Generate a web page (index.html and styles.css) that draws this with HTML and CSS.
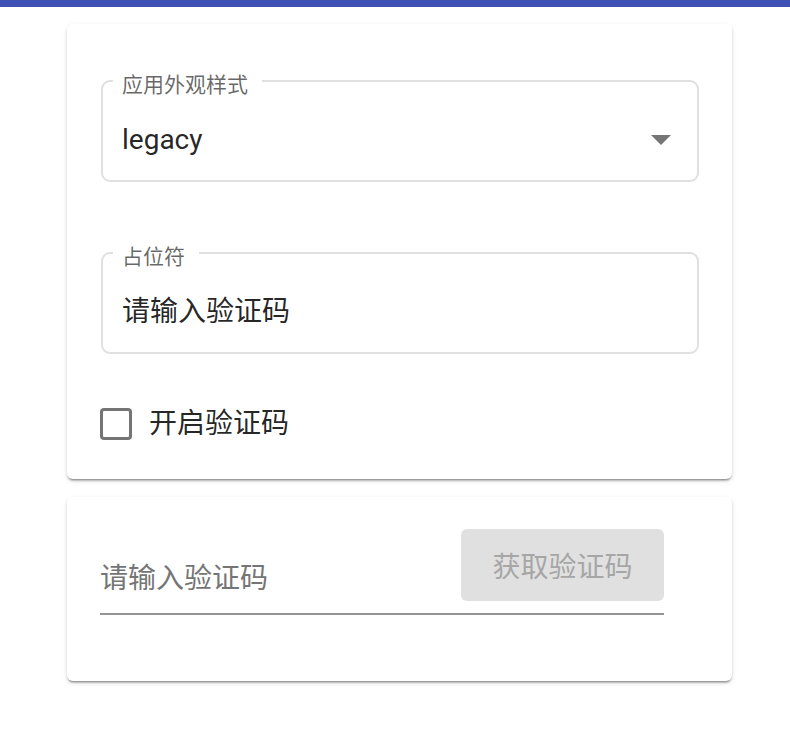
FILE: index.html
```html
<!DOCTYPE html>
<html lang="zh-CN">
<head>
    <meta charset="UTF-8">
    <meta name="viewport" content="width=device-width, initial-scale=1.0">
    <title>验证码</title>
    <link rel="stylesheet" href="styles.css">
</head>
<body>
    <div class="toolbar"></div>

    <div class="content">
        <div class="card">
            <fieldset class="outline">
                <legend>应用外观样式</legend>
                <div class="select">
                    <span class="value">legacy</span>
                    <span class="arrow"></span>
                </div>
            </fieldset>

            <fieldset class="outline spaced">
                <legend>占位符</legend>
                <div class="value">请输入验证码</div>
            </fieldset>

            <label class="check">
                <input type="checkbox">
                <span>开启验证码</span>
            </label>
        </div>

        <div class="card card-code">
            <div class="code-field">
                <input type="text" class="code-input" placeholder="请输入验证码">
                <button class="btn" disabled>获取验证码</button>
            </div>
        </div>
    </div>
</body>
</html>
```

FILE: styles.css
```css
body {
    margin: 0;
    padding: 0;
    background: #fff;
    font-family: Roboto, "Noto Sans CJK SC", sans-serif;
    color: rgba(0, 0, 0, 0.87);
}
.toolbar {
    height: 7px;
    background: #3f51b5;
}
.content {
    width: 665px;
    padding: 17px 0 0 67px;
}
.card {
    background: #fff;
    border-radius: 6px;
    padding: 41px 33px 39px 34px;
    margin-bottom: 18px;
    box-shadow: 0 3px 2px -2px rgba(0, 0, 0, 0.3),
                0 2px 2px 0 rgba(0, 0, 0, 0.14),
                0 2px 5px 0 rgba(0, 0, 0, 0.12);
}
.outline {
    margin: 0;
    min-width: 0;
    border: 2px solid #e0e0e0;
    border-radius: 9px;
    padding: 27px 26px 24px 19px;
}
.outline legend {
    margin-left: -9px;
    padding: 8px 14px 0 9px;
    font-size: 21px;
    line-height: 24px;
    color: rgba(0, 0, 0, 0.6);
}
.spaced {
    margin-top: 55px;
}
.value {
    font-size: 28px;
    line-height: 32px;
}
.select {
    display: flex;
    align-items: center;
    justify-content: space-between;
}
.arrow {
    width: 0;
    height: 0;
    border-left: 10px solid transparent;
    border-right: 10px solid transparent;
    border-top: 10px solid #757575;
}
.check {
    display: flex;
    align-items: center;
    margin-top: 54px;
    font-size: 28px;
    line-height: 32px;
}
.check input {
    appearance: none;
    margin: 0 17px 0 -1px;
    width: 32px;
    height: 32px;
    border: 3.5px solid #757575;
    border-radius: 4px;
    box-sizing: border-box;
}
.card-code {
    padding: 32px 33px 66px;
}
.code-field {
    width: 564px;
    display: flex;
    align-items: flex-end;
    padding-bottom: 12px;
    border-bottom: 2px solid #949494;
}
.code-input {
    flex: 1;
    min-width: 0;
    margin: 0 0 6px;
    padding: 0;
    border: none;
    outline: none;
    font-family: inherit;
    font-size: 28px;
    line-height: 32px;
    color: rgba(0, 0, 0, 0.87);
    background: transparent;
}
.code-input::placeholder {
    color: #757575;
}
.btn {
    width: 203px;
    height: 72px;
    border: none;
    border-radius: 6px;
    background: #e0e0e0;
    color: #a6a6a6;
    font-family: inherit;
    font-size: 28px;
    padding: 0;
}
```
